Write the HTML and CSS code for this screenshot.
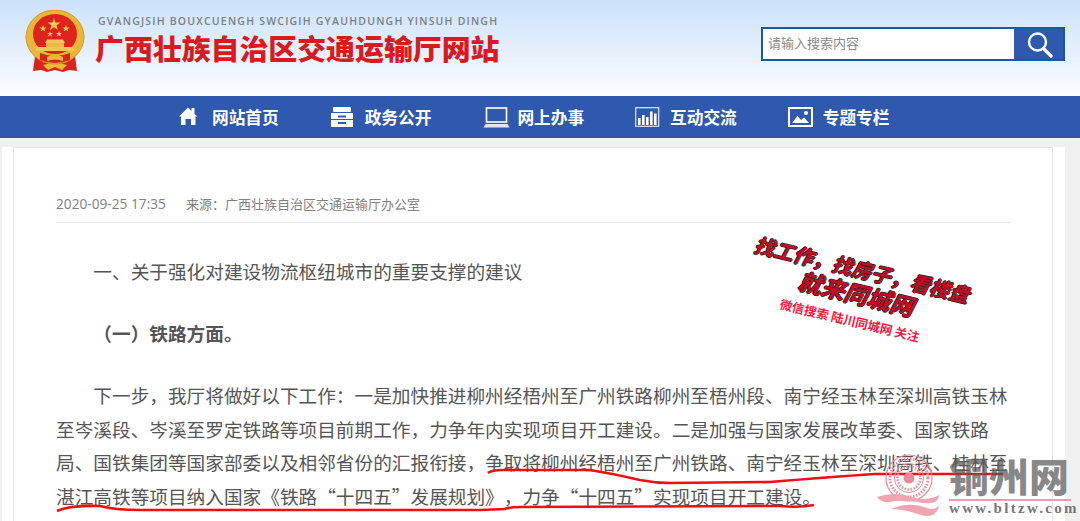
FILE: index.html
```html
<!DOCTYPE html>
<html lang="zh-CN">
<head>
<meta charset="utf-8">
<title>广西壮族自治区交通运输厅网站</title>
<link rel="stylesheet" href="styles.css">
</head>
<body>
<header class="header">
  <svg class="emblem" width="60" height="64" viewBox="0 0 60 64">
    <path d="M10 46 L8 61 L16 60 L22 62 L30 60 L38 62 L44 60 L52 61 L50 46 Z" fill="#d8231f"/>
    <path d="M18 55 L30 52 L42 55 L37 60 L30 57 L23 60 Z" fill="#e9b93a"/>
    <ellipse cx="30" cy="27" rx="29" ry="27" fill="#e8b73a"/>
    <ellipse cx="30" cy="27" rx="29" ry="27" fill="none" stroke="#d29a22" stroke-width="1"/>
    <ellipse cx="30" cy="24" rx="22" ry="20" fill="#e0221e"/>
    <polygon points="29,8 30.5,12.6 35.4,12.6 31.5,15.4 33,20 29,17.2 25,20 26.5,15.4 22.6,12.6 27.5,12.6" fill="#f4cb4a"/>
    <polygon points="18,15 19,17.4 21.6,17.4 19.5,19 20.3,21.6 18,20 15.7,21.6 16.5,19 14.4,17.4 17,17.4" fill="#f4cb4a"/>
    <polygon points="41,15 42,17.4 44.6,17.4 42.5,19 43.3,21.6 41,20 38.7,21.6 39.5,19 37.4,17.4 40,17.4" fill="#f4cb4a"/>
    <polygon points="25,21 25.8,23 28,23 26.2,24.3 26.9,26.4 25,25.2 23.1,26.4 23.8,24.3 22,23 24.2,23" fill="#f4cb4a"/>
    <polygon points="34,21 34.8,23 37,23 35.2,24.3 35.9,26.4 34,25.2 32.1,26.4 32.8,24.3 31,23 33.2,23" fill="#f4cb4a"/>
    <path d="M20 33 L22 29.5 L38 29.5 L40 33 Z" fill="#f0c65a"/>
    <rect x="21" y="33" width="18" height="4" fill="#e9bb45"/>
    <rect x="11" y="37" width="38" height="4" fill="#f0c65a"/>
    <path d="M15 43 Q30 49 45 43 L45 50 Q30 56 15 50 Z" fill="#d8231f"/>
    <path d="M22 47 Q30 42 38 47 L38 51 Q30 48 22 51 Z" fill="#eab93c"/>
  </svg>
  <div class="brand">
    <div class="brand-en">GVANGJSIH BOUXCUENGH SWCIGIH GYAUHDUNGH YINSUH DINGH</div>
    <div class="brand-cn">广西壮族自治区交通运输厅网站</div>
  </div>
  <form class="search">
    <div class="search-input">请输入搜索内容</div>
    <div class="search-btn">
      <svg width="28" height="28" viewBox="0 0 28 28"><circle cx="12.5" cy="12" r="8.5" fill="none" stroke="#fff" stroke-width="2.4"/><path d="M18.5 18.5 L26 26" stroke="#fff" stroke-width="3.2" stroke-linecap="round"/></svg>
    </div>
  </form>
</header>

<nav class="nav">
  <a class="nav-item">
    <svg class="nav-icon" width="35" height="24" viewBox="0 0 35 24"><path d="M2 11.5 L11 2.5 L14.5 6 L14.5 3 L17.5 3 L17.5 9 L20.5 11.5 L18.5 11.5 L18.5 20 L14 20 L14 14 L8.5 14 L8.5 20 L4 20 L4 11.5 Z" fill="#fff"/></svg>
    <span>网站首页</span>
  </a>
  <a class="nav-item">
    <svg class="nav-icon" width="35" height="24" viewBox="0 0 35 24"><rect x="3" y="2" width="18" height="5" rx="1" fill="#fff"/><rect x="1" y="8" width="22" height="6" fill="#fff"/><rect x="1" y="15" width="22" height="7" fill="#fff"/><rect x="8" y="10.5" width="8" height="2" fill="#2e59ae"/><rect x="8" y="17" width="8" height="2" fill="#2e59ae"/></svg>
    <span>政务公开</span>
  </a>
  <a class="nav-item">
    <svg class="nav-icon" width="35" height="24" viewBox="0 0 35 24"><rect x="4.5" y="3" width="20" height="14" fill="none" stroke="#fff" stroke-width="1.6"/><path d="M3.5 19 L25.5 19 L27.5 22.5 L1.5 22.5 Z" fill="#dfe7f6"/></svg>
    <span>网上办事</span>
  </a>
  <a class="nav-item">
    <svg class="nav-icon" width="35" height="24" viewBox="0 0 35 24"><rect x="0.7" y="2.7" width="23" height="18.6" fill="none" stroke="#dfe7f6" stroke-width="1.2"/><rect x="3" y="13" width="2.6" height="7" fill="#fff"/><rect x="7" y="10" width="2.6" height="10" fill="#fff"/><rect x="11" y="12" width="2.6" height="8" fill="#fff"/><rect x="15" y="6.5" width="2.6" height="13.5" fill="#fff"/><rect x="19" y="8.5" width="2.6" height="11.5" fill="#fff"/></svg>
    <span>互动交流</span>
  </a>
  <a class="nav-item">
    <svg class="nav-icon" width="35" height="24" viewBox="0 0 35 24"><rect x="1" y="3" width="23" height="18" fill="none" stroke="#fff" stroke-width="2"/><path d="M4 18 L9.5 11 L13 15 L16 12.5 L21 18 Z" fill="#fff"/><circle cx="18" cy="8" r="2" fill="#fff"/></svg>
    <span>专题专栏</span>
  </a>
</nav>

<main class="page">
  <div class="sheet">
    <article class="card">
      <div class="meta"><span class="meta-date">2020-09-25 17:35</span><span>来源：广西壮族自治区交通运输厅办公室</span></div>
      <div class="content">
        <p>一、关于强化对建设物流枢纽城市的重要支撑的建议</p>
        <p class="strong">（一）铁路方面。</p>
        <p>下一步，我厅将做好以下工作：一是加快推进柳州经梧州至广州铁路柳州至梧州段、南宁经玉林至深圳高铁玉林至岑溪段、岑溪至罗定铁路等项目前期工作，力争年内实现项目开工建设。二是加强与国家发展改革委、国家铁路局、国铁集团等国家部委以及相邻省份的汇报衔接，争取将柳州经梧州至广州铁路、南宁经玉林至深圳高铁、桂林至湛江高铁等项目纳入国家《铁路“十四五”发展规划》，力争“十四五”实现项目开工建设。</p>
      </div>
    </article>
  </div>
</main>

<svg class="ink" width="1080" height="521" viewBox="0 0 1080 521">
  <path d="M488 473 Q492 470 502 470 L590 470 Q615 474 640 480 Q655 483 670 483 L770 482 Q830 477 875 474 L1003 474" fill="none" stroke="#f00f0f" stroke-width="2.6"/>
  <path d="M57 511 Q70 505 100 506 Q115 510 140 510 L205 510 L480 510 L505 509 Q510 507 520 507 L780 506 Q800 508 814 505" fill="none" stroke="#f00f0f" stroke-width="2.6"/>
</svg>

<div class="stamp">
  <div class="stamp-line stamp-a">找工作，找房子，看楼盘</div>
  <div class="stamp-line stamp-b">就来同城网</div>
  <div class="stamp-line stamp-c">微信搜索 陆川同城网 关注</div>
</div>

<div class="mark">
  <svg class="mark-logo" width="66" height="70" viewBox="0 0 66 70">
    <g fill="none" stroke="#e98a9a">
      <circle cx="32" cy="25" r="23" stroke-width="1.2"/>
      <circle cx="32" cy="25" r="19" stroke-width="3" stroke-dasharray="1.5 1.5"/>
      <circle cx="32" cy="25" r="14.5" stroke-width="1"/>
      <circle cx="32" cy="25" r="11.5" stroke-width="2.5" stroke-dasharray="1.5 1.5"/>
    </g>
    <circle cx="32" cy="25" r="5.5" fill="#e98a9a"/>
    <path d="M0 44 Q18 38 34 44 Q50 49 62 42 Q62 52 46 50 Q28 46 12 49 Q4 50 0 44 Z" fill="#f0a3b0"/>
    <path d="M14 56 Q32 48 50 55 Q58 58 62 52 Q60 66 44 62 Q28 56 14 56 Z" fill="#f0a3b0"/>
  </svg>
  <div class="mark-text">
    <div class="mark-cn">铜州网</div>
    <div class="mark-url">www.bltzw.com</div>
  </div>
</div>
</body>
</html>
```
FILE: styles.css
```css
* { box-sizing: border-box; }
html, body {
  margin: 0;
  height: 521px;
  overflow: hidden;
}
body {
  position: relative;
  background: #f0f0f0;
  font-family: "Noto Sans CJK SC", "Noto Sans", sans-serif;
  text-spacing-trim: space-all;
}
.header {
  height: 96px;
  display: flex;
  align-items: flex-start;
  padding: 10px 15px 0 25px;
  background: linear-gradient(180deg, #cbe2fb 0%, #e3effc 50%, #fcfdff 100%);
}
.emblem { flex: none; }
.brand { margin: 4px 0 0 10px; }
.brand-en {
  padding-left: 3px;
  font-family: "Open Sans", "Liberation Sans", sans-serif;
  font-size: 10.5px;
  font-weight: 600;
  line-height: 14px;
  letter-spacing: 1.2px;
  color: #7d7f82;
  white-space: nowrap;
}
.brand-cn {
  margin-top: 1px;
  font-size: 28.9px;
  font-weight: 900;
  line-height: 36px;
  color: #da1a1f;
  white-space: nowrap;
}
.search {
  margin: 17px 0 0 auto;
  width: 304px;
  height: 34px;
  display: flex;
  border: 2px solid #145c9c;
  background: #fff;
}
.search-input {
  flex: 1;
  padding-left: 5px;
  font-size: 13px;
  line-height: 28px;
  color: #888;
}
.search-btn {
  width: 49px;
  display: flex;
  align-items: center;
  justify-content: center;
  background: #2e59ae;
}
.nav {
  height: 42px;
  display: flex;
  padding-left: 177px;
  background: #2e59ae;
}
.nav-item {
  width: 152.7px;
  display: flex;
  align-items: center;
  font-size: 16.7px;
  font-weight: 700;
  color: #fff;
  white-space: nowrap;
}
.nav-icon { flex: none; }
.page { padding: 9px 15px 0 2px; }
.sheet {
  height: 374px;
  padding: 0 12px 0 11px;
  background: #fff;
}
.card {
  height: 100%;
  padding: 0 42px 0 42px;
  border: 1px solid #e4e4e4;
  border-bottom: 0;
}
.meta {
  margin-top: 46px;
  padding-bottom: 9px;
  border-bottom: 1px solid #e6e6e6;
  font-size: 13px;
  line-height: 19px;
  color: #808080;
}
.meta-date {
  margin-right: 20px;
  font-family: "Open Sans", sans-serif;
  font-size: 13.7px;
}
.content {
  font-size: 18.67px;
  line-height: 33.6px;
  color: #555;
}
.content p {
  margin: 31px 0 0;
  text-indent: 2em;
}
.content p + p { margin-top: 28.4px; }
.content .strong { font-weight: 700; }
.ink {
  position: absolute;
  left: 0;
  top: 0;
  pointer-events: none;
}
.stamp {
  position: absolute;
  left: 736px;
  top: 259px;
  width: 240px;
  transform: rotate(13.5deg);
  text-align: center;
}
.stamp-line { white-space: nowrap; font-weight: 700; }
.stamp-a, .stamp-b {
  font-style: italic;
  color: #c40d24;
  text-shadow: .8px 0 0 #222, -.8px 0 0 #222, 0 .8px 0 #222, 0 -.8px 0 #222;
}
.stamp-a { font-size: 20px; line-height: 20px; }
.stamp-b { font-size: 23.5px; line-height: 28px; }
.stamp-c {
  margin-top: 6px;
  font-size: 12.5px;
  line-height: 16px;
  color: #f2173f;
}
.mark {
  position: absolute;
  left: 877px;
  top: 453px;
  display: flex;
}
.mark-logo { flex: none; margin-right: 4px; }
.mark-text { width: 124px; padding-left: 2px; }
.mark-cn {
  padding-bottom: 2px;
  border-bottom: 2px solid #ef9aaa;
  font-size: 40px;
  line-height: 44px;
  font-weight: 900;
  color: rgba(90, 90, 90, .72);
  white-space: nowrap;
}
.mark-url {
  font-family: "Liberation Serif", serif;
  font-size: 15px;
  font-weight: 700;
  line-height: 14px;
  letter-spacing: 2.3px;
  color: #777;
  white-space: nowrap;
}
```
